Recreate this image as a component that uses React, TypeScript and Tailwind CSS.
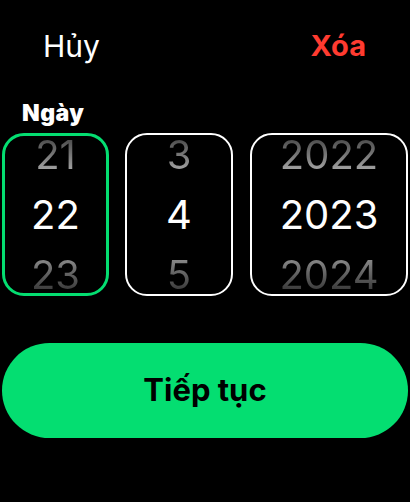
import React from 'react';

const FONT = { fontFamily: 'Inter, "Noto Sans", sans-serif' };

interface WheelProps {
  prev: string;
  current: string;
  next: string;
  active?: boolean;
  width: string;
}

function Wheel({ prev, current, next, active, width }: WheelProps) {
  return (
    <div
      className={`${width} h-[163px] rounded-[22px] overflow-hidden flex flex-col items-center justify-center ${
        active ? 'border-[3px] border-[#04de71]' : 'border-2 border-white'
      }`}
    >
      <span className="shrink-0 h-[60px] leading-[60px] text-[40px] bg-gradient-to-b from-[#2a2a2a] to-[#d0d0d0] bg-clip-text text-transparent">
        {prev}
      </span>
      <span className="shrink-0 h-[60px] leading-[60px] text-[40px] text-white">{current}</span>
      <span className="shrink-0 h-[60px] leading-[60px] text-[40px] bg-gradient-to-b from-[#b0b0b0] to-[#1a1a1a] bg-clip-text text-transparent">
        {next}
      </span>
    </div>
  );
}

export default function App() {
  return (
    <div className="w-[410px] h-[502px] bg-black flex flex-col" style={FONT}>
      {/* Header */}
      <div className="flex items-center justify-between pt-[28px] pl-[43px] pr-[44px]">
        <button className="text-[30px] leading-[36px] text-white font-normal">Hủy</button>
        <button className="text-[29px] leading-[36px] text-[#ff3b30] font-bold">Xóa</button>
      </div>

      <div className="mt-[35px] pl-[22px] text-[23px] leading-[28px] font-black text-white tracking-[0.5px]">Ngày</div>

      {/* Pickers */}
      <div className="mt-[6px] flex pl-[2px] gap-[16px]">
        <Wheel prev="21" current="22" next="23" active width="w-[107px]" />
        <Wheel prev="3" current="4" next="5" width="w-[108px]" />
        <Wheel prev="2022" current="2023" next="2024" width="w-[158px] ml-[1px]" />
      </div>

      <div className="mt-[47px] px-[2px]">
        <button className="w-full h-[95px] rounded-full bg-[#04de71] text-black text-[31px] font-bold">
          Tiếp tục
        </button>
      </div>
    </div>
  );
}
